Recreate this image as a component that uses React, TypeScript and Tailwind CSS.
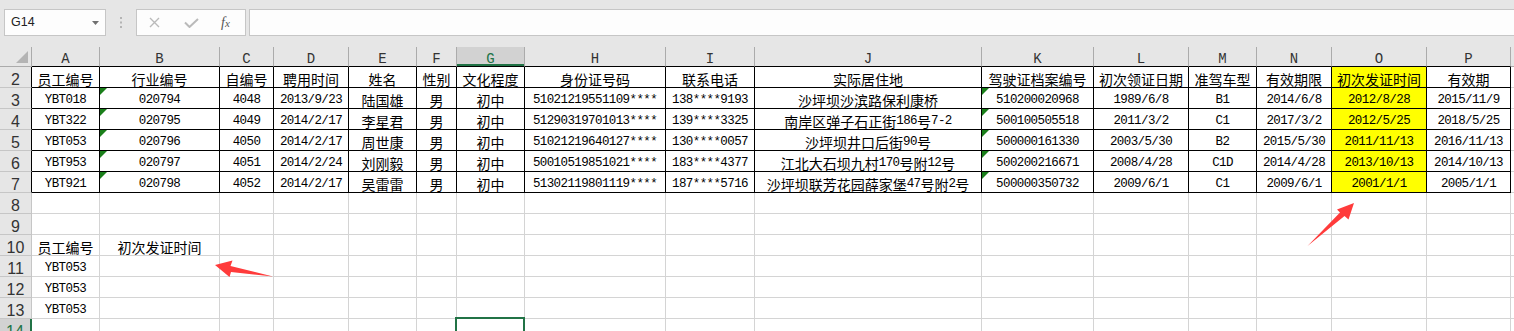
import clsx from 'clsx';

const cols = [
  { k: 'A', w: 'w-[68px]' },
  { k: 'B', w: 'w-[120px]' },
  { k: 'C', w: 'w-[54px]' },
  { k: 'D', w: 'w-[75px]' },
  { k: 'E', w: 'w-[68px]' },
  { k: 'F', w: 'w-[40px]' },
  { k: 'G', w: 'w-[68px]' },
  { k: 'H', w: 'w-[141px]' },
  { k: 'I', w: 'w-[89px]' },
  { k: 'J', w: 'w-[227px]' },
  { k: 'K', w: 'w-[112px]' },
  { k: 'L', w: 'w-[95px]' },
  { k: 'M', w: 'w-[68px]' },
  { k: 'N', w: 'w-[75px]' },
  { k: 'O', w: 'w-[95px]' },
  { k: 'P', w: 'w-[84px]' },
];

const table: string[][] = [
  ['员工编号', '行业编号', '自编号', '聘用时间', '姓名', '性别', '文化程度', '身份证号码', '联系电话', '实际居住地', '驾驶证档案编号', '初次领证日期', '准驾车型', '有效期限', '初次发证时间', '有效期'],
  ['YBT018', '020794', '4048', '2013/9/23', '陆国雄', '男', '初中', '51021219551109****', '138****9193', '沙坪坝沙滨路保利康桥', '510200020968', '1989/6/8', 'B1', '2014/6/8', '2012/8/28', '2015/11/9'],
  ['YBT322', '020795', '4049', '2014/2/17', '李星君', '男', '初中', '51290319701013****', '139****3325', '南岸区弹子石正街186号7-2', '500100505518', '2011/3/2', 'C1', '2017/3/2', '2012/5/25', '2018/5/25'],
  ['YBT053', '020796', '4050', '2014/2/17', '周世康', '男', '初中', '51021219640127****', '130****0057', '沙坪坝井口后街90号', '500000161330', '2003/5/30', 'B2', '2015/5/30', '2011/11/13', '2016/11/13'],
  ['YBT953', '020797', '4051', '2014/2/24', '刘刚毅', '男', '初中', '50010519851021****', '183****4377', '江北大石坝九村170号附12号', '500200216671', '2008/4/28', 'C1D', '2014/4/28', '2013/10/13', '2014/10/13'],
  ['YBT921', '020798', '4052', '2014/2/17', '吴雷雷', '男', '初中', '51302119801119****', '187****5716', '沙坪坝联芳花园薛家堡47号附2号', '500000350732', '2009/6/1', 'C1', '2009/6/1', '2001/1/1', '2005/1/1'],
];

const extra: Record<number, string[]> = {
  10: ['员工编号', '初次发证时间'],
  11: ['YBT053'],
  12: ['YBT053'],
  13: ['YBT053'],
};

// latin runs get a narrower mono face, like SimSun half-width glyphs
function Txt({ s }: { s: string }) {
  const parts = s.split(/([\x20-\x7e]+)/).filter(Boolean);
  return (
    <>
      {parts.map((p, i) =>
        /^[\x20-\x7e]+$/.test(p) ? (
          <span key={i} className="font-['Liberation_Mono',monospace] text-[12.5px] tracking-[-0.6px]">
            {p}
          </span>
        ) : (
          <span key={i}>{p}</span>
        )
      )}
    </>
  );
}

function Toolbar() {
  return (
    <div className="h-[47px] bg-[#e6e6e6] flex items-start pt-[9px] pl-[4px]">
      <div className="w-[102px] h-[27px] border border-[#c6c6c6] bg-[#fdfdfd] flex items-center justify-between pl-[6px] pr-[6px]">
        <span className="font-['Liberation_Sans',sans-serif] text-[12.5px] text-[#222]">G14</span>
        <svg width="7" height="4" viewBox="0 0 7 4">
          <path d="M0 0 L7 0 L3.5 4 Z" fill="#707070" />
        </svg>
      </div>
      <div className="w-[30px] h-[27px] flex items-center justify-center">
        <svg width="2" height="11" viewBox="0 0 2 11">
          <rect x="0" y="0" width="2" height="2" fill="#b4b4b4" />
          <rect x="0" y="4.5" width="2" height="2" fill="#b4b4b4" />
          <rect x="0" y="9" width="2" height="2" fill="#b4b4b4" />
        </svg>
      </div>
      <div className="w-[110px] h-[27px] border border-[#c6c6c6] bg-[#fdfdfd] flex items-center pl-[12px]">
        <svg width="11" height="11" viewBox="0 0 11 11">
          <path d="M1 1 L10 10 M10 1 L1 10" stroke="#bababa" strokeWidth="1.4" />
        </svg>
        <svg className="ml-[24px]" width="15" height="10" viewBox="0 0 15 10">
          <path d="M1 4.5 L5.5 9 L14 1" stroke="#bababa" strokeWidth="2" fill="none" />
        </svg>
        <span className="ml-[22px] italic font-['Liberation_Serif',serif] text-[14px] text-[#555] leading-none">
          f<span className="text-[11px]">x</span>
        </span>
      </div>
      <div className="ml-[3px] flex-1 h-[27px] border border-r-0 border-[#c6c6c6] bg-[#fdfdfd]" />
    </div>
  );
}

function HeaderRow() {
  return (
    <div className="flex h-[20px]">
      <div className="w-[32px] shrink-0 bg-[#e6e6e6] border-r border-b border-[#ababab] flex items-end justify-end pr-[3px] pb-[3px]">
        <svg width="12" height="12" viewBox="0 0 12 12">
          <path d="M12 0 L12 12 L0 12 Z" fill="#b4b4b4" />
        </svg>
      </div>
      {cols.map((c) => (
        <div
          key={c.k}
          className={clsx(
            'shrink-0 border-r border-r-[#ababab] border-b border-b-black flex items-end justify-center',
            "font-['Liberation_Mono',monospace] text-[14px] leading-[14px]",
            c.w,
            c.k === 'G'
              ? 'bg-[#d2d2d2] text-[#217346] shadow-[inset_0_-2px_0_#217346]'
              : 'bg-[#e6e6e6] text-[#333]'
          )}
        >
          {c.k}
        </div>
      ))}
      <div className="flex-1 bg-[#e6e6e6] border-b border-[#ababab]" />
    </div>
  );
}

function Row({ n }: { n: number }) {
  const boxed = n >= 2 && n <= 7;
  const vals = boxed ? table[n - 2] : extra[n] || [];
  const sel = n === 14;
  return (
    <div className="flex h-[21px]">
      <div
        className={clsx(
          'w-[32px] shrink-0 border-b border-b-[#c6c6c6] flex items-end justify-center',
          "font-['Liberation_Sans',sans-serif] text-[16px] leading-[14px]",
          sel
            ? 'bg-[#d2d2d2] text-[#217346] border-r-2 border-r-[#217346]'
            : clsx('bg-[#e6e6e6] text-[#333] border-r', boxed ? 'border-r-black' : 'border-r-[#c6c6c6]')
        )}
      >
        {n}
      </div>
      {cols.map((c, i) => {
        const v = vals[i];
        const flag = n >= 3 && n <= 7 && (c.k === 'B' || c.k === 'K');
        return (
          <div
            key={c.k}
            className={clsx(
              'relative shrink-0 border-r border-b flex items-end justify-center whitespace-nowrap',
              "font-['Noto_Sans_CJK_SC',sans-serif] text-[14px] leading-[16px] text-black",
              c.w,
              boxed ? 'border-black' : 'border-[#d4d4d4]',
              boxed && c.k === 'O' && 'bg-[#ffff00]'
            )}
          >
            {flag && (
              <span className="absolute top-0 left-0 w-0 h-0 border-t-[7px] border-t-[#1a7f1a] border-r-[7px] border-r-transparent" />
            )}
            {v && <Txt s={v} />}
            {sel && c.k === 'G' && (
              <span className="absolute -left-[2px] -top-[2px] w-[70px] h-[24px] border-2 border-[#217346]" />
            )}
          </div>
        );
      })}
      <div className="flex-1 border-b border-[#d4d4d4]" />
    </div>
  );
}

export default function App() {
  const rows = [2, 3, 4, 5, 6, 7, 8, 9, 10, 11, 12, 13, 14];
  return (
    <div className="relative w-[1514px] h-[331px] overflow-hidden bg-white">
      <Toolbar />
      <HeaderRow />
      {rows.map((n) => (
        <Row key={n} n={n} />
      ))}

      {/* red annotation arrows */}
      <svg className="absolute inset-0 pointer-events-none" width="1514" height="331" viewBox="0 0 1514 331">
        <polygon
          points="215,265 232.5,260.5 230.5,266 273,276.5 231,272 229.5,277"
          fill="#ff3b3b"
        />
        <polygon
          points="1354,203 1348.5,219.5 1344.5,216 1307.5,246 1340,212.5 1337,209.5"
          fill="#ff3b3b"
        />
      </svg>
    </div>
  );
}
